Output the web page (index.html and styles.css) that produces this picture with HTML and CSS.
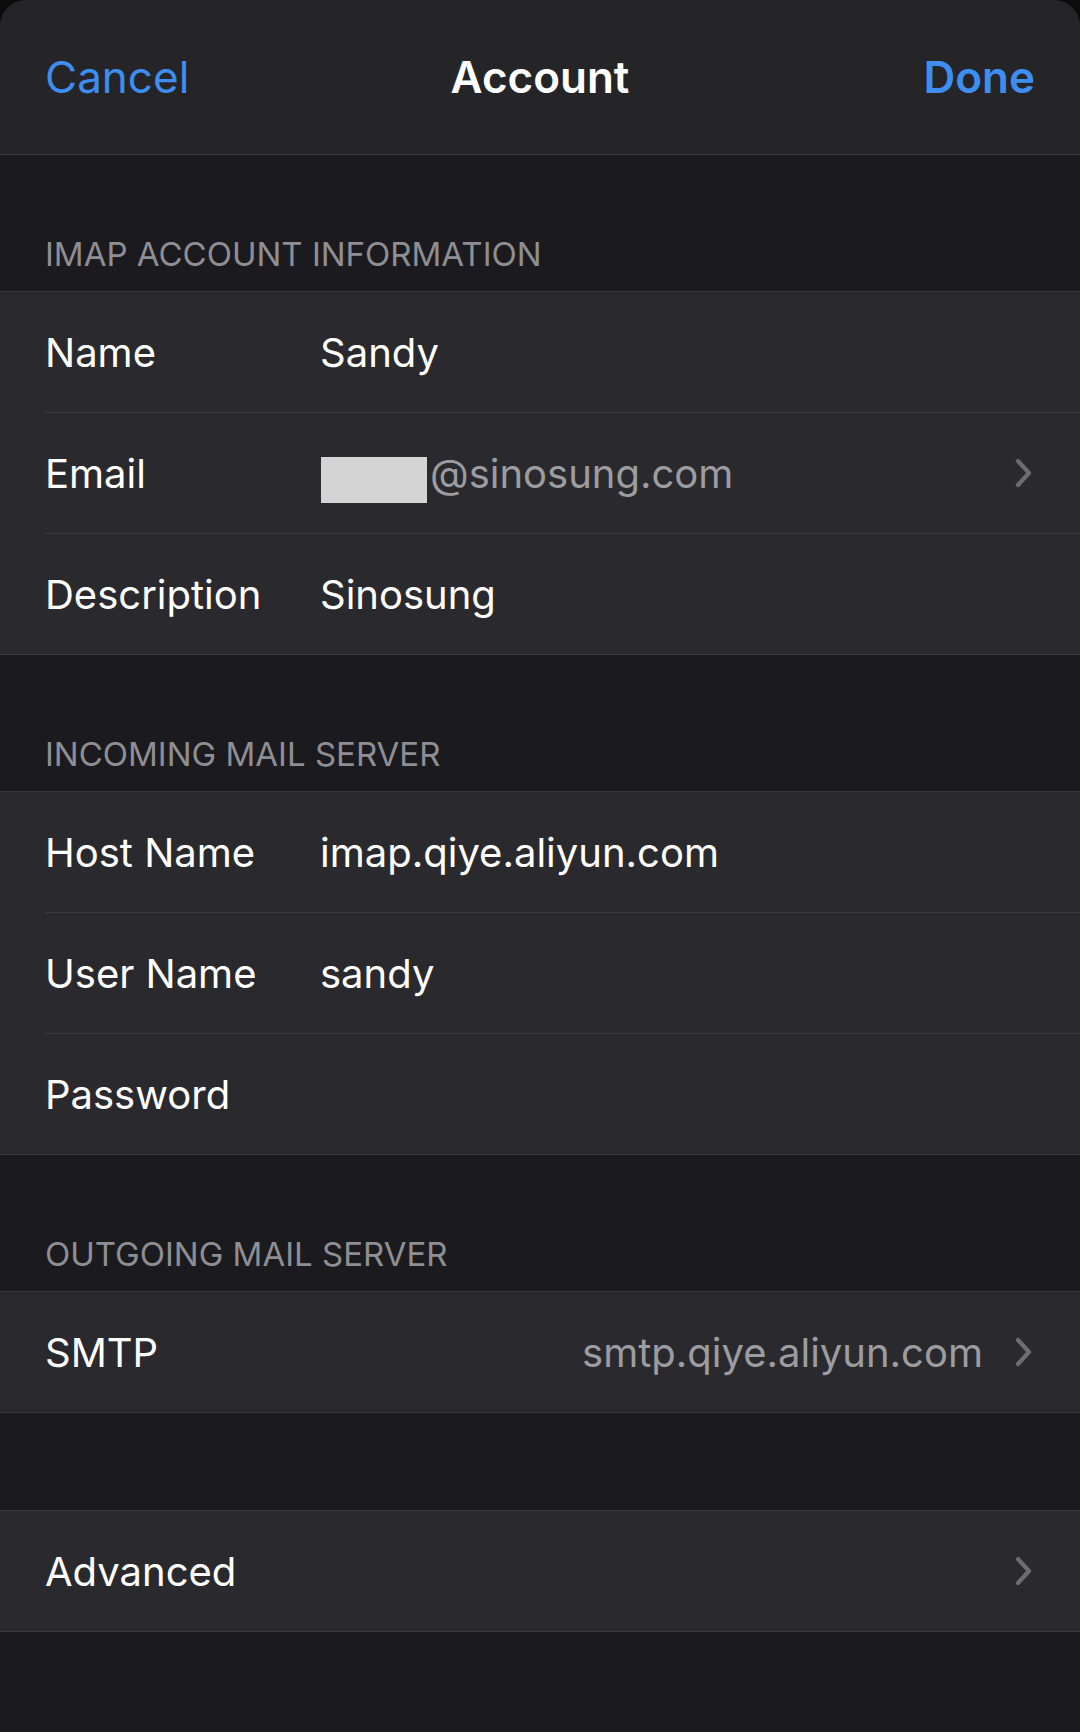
FILE: index.html
```html
<!DOCTYPE html>
<html lang="en">
<head>
  <meta charset="UTF-8">
  <meta name="viewport" content="width=device-width, initial-scale=1.0">
  <title>Account</title>
  <link rel="stylesheet" href="styles.css">
</head>
<body>
  <div class="sheet">
    <!-- 상단 네비 -->
    <div class="nav">
      <span class="navBt">Cancel</span>
      <span class="navTitle">Account</span>
      <span class="navBt done">Done</span>
    </div>

    <div class="secHead">IMAP ACCOUNT INFORMATION</div>
    <div class="group">
      <div class="row">
        <span class="label">Name</span>
        <span class="value">Sandy</span>
      </div>
      <div class="row">
        <span class="label">Email</span>
        <span class="value gray"><span class="mask"></span>@sinosung.com</span>
        <svg class="chev" viewBox="0 0 18 30"><path d="M3 3 L14 15 L3 27"/></svg>
      </div>
      <div class="row">
        <span class="label">Description</span>
        <span class="value">Sinosung</span>
      </div>
    </div>

    <div class="secHead">INCOMING MAIL SERVER</div>
    <div class="group">
      <div class="row">
        <span class="label">Host Name</span>
        <span class="value">imap.qiye.aliyun.com</span>
      </div>
      <div class="row">
        <span class="label">User Name</span>
        <span class="value">sandy</span>
      </div>
      <div class="row">
        <span class="label">Password</span>
        <span class="value"></span>
      </div>
    </div>

    <div class="secHead">OUTGOING MAIL SERVER</div>
    <div class="group">
      <div class="row">
        <span class="label">SMTP</span>
        <span class="value gray right">smtp.qiye.aliyun.com</span>
        <svg class="chev" viewBox="0 0 18 30"><path d="M3 3 L14 15 L3 27"/></svg>
      </div>
    </div>

    <div class="spacer"></div>
    <div class="group">
      <div class="row">
        <span class="label">Advanced</span>
        <span class="value"></span>
        <svg class="chev" viewBox="0 0 18 30"><path d="M3 3 L14 15 L3 27"/></svg>
      </div>
    </div>
  </div>
</body>
</html>
```

FILE: styles.css
```css
body{
  margin: 0; background-color: #0c0c0d;
  font-family: "Inter", "Noto Sans", sans-serif;
}
.sheet{
  min-height: 1732px; background-color: #1b1b1f;
  border-radius: 26px 26px 0 0; overflow: hidden;
}
.nav{
  height: 155px; padding: 51px 45px 0; box-sizing: border-box;
  display: flex; justify-content: space-between; align-items: flex-start;
  background-color: #252528; border-bottom: 1px solid #3a3a3e;
  font-size: 44px; line-height: 52px;
}
.navBt{
  width: 200px; color: #3d8ef0;
}
.done{
  text-align: right; font-weight: 600;
}
.navTitle{
  color: white; font-weight: 600;
}
.secHead{
  height: 136px; padding: 0 45px 17px; box-sizing: border-box;
  display: flex; align-items: flex-end;
  color: #8e8e93; font-size: 33px; line-height: 40px;
}
.spacer{
  height: 97px;
}
.group{
  background-color: #2a2a2e;
  border-top: 1px solid #3a3a3e; border-bottom: 1px solid #3a3a3e;
}
.row{
  height: 120px; margin-left: 45px; padding-right: 47px;
  display: flex; align-items: center;
  border-bottom: 1px solid #3a3a3e;
  color: white; font-size: 40px;
}
.row:last-child{
  border-bottom: none;
}
.label{
  width: 275px; flex-shrink: 0;
}
.value{
  flex: 1; display: flex; align-items: center;
}
.gray{
  color: #9c9ca1;
}
.right{
  justify-content: flex-end; margin-right: 32px;
}
.mask{
  width: 106px; height: 46px; margin: 13px 3px 0 1px;
  background-color: #d4d4d4;
}
.chev{
  width: 18px; height: 30px;
}
.chev path{
  fill: none; stroke: #6c6c71; stroke-width: 4.2;
  stroke-linecap: round; stroke-linejoin: round;
}
```
